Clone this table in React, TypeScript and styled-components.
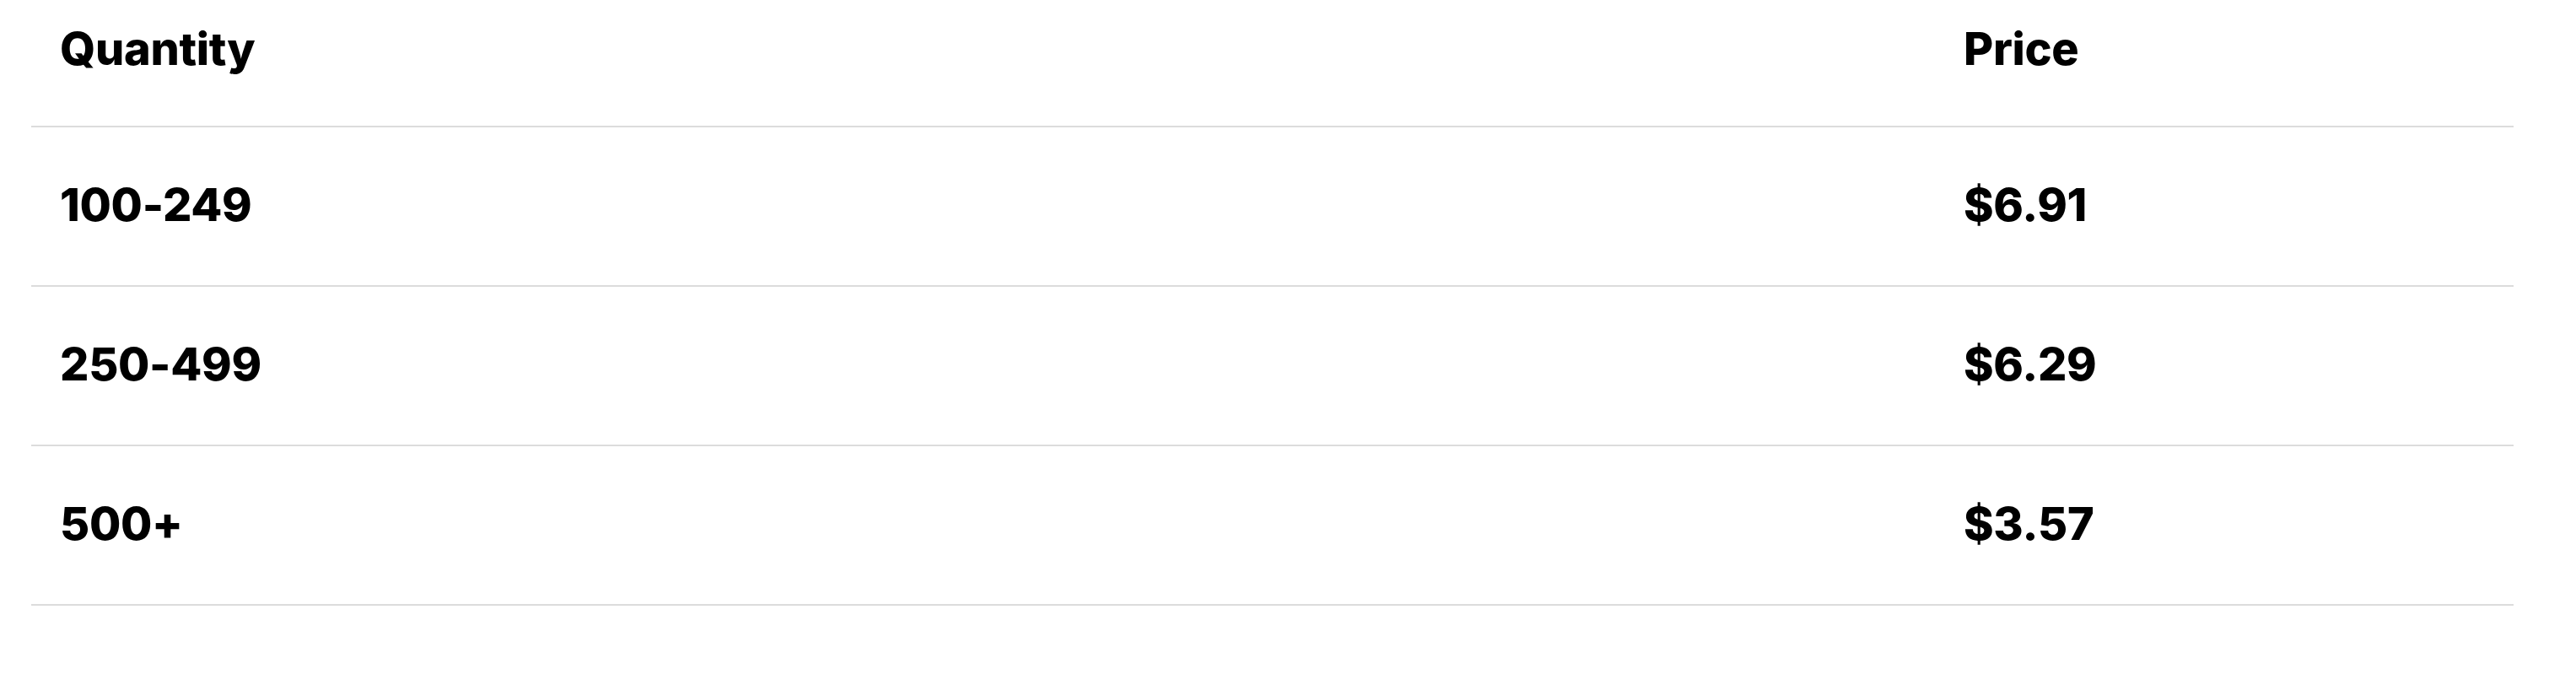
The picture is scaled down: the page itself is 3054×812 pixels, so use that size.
import React from 'react';
import styled, { createGlobalStyle } from 'styled-components';

const GlobalStyle = createGlobalStyle`
    html, body {
        margin: 0;
        padding: 0;
        background: #ffffff;
    }

    body {
        font-family: Inter, "Liberation Sans", sans-serif;
        color: #000000;
    }
`;

const Page = styled.div`
    padding-left: 37px;
    width: 2943px;
`;

const Table = styled.table`
    width: 100%;
    border-collapse: collapse;
    table-layout: fixed;
`;

const HeadCell = styled.th<{ $width?: number }>`
    width: ${props => (props.$width ? `${props.$width}px` : 'auto')};
    height: 150px;
    padding: 26px 0 0 34px;
    box-sizing: border-box;
    text-align: left;
    vertical-align: top;
    font-size: 54px;
    font-weight: 800;
    letter-spacing: -0.3px;
    line-height: 1.2;
    border-bottom: 2px solid #dcdcdc;
`;

const Row = styled.tr`
    height: 189px;
`;

const Cell = styled.td`
    padding: 0 0 2px 34px;
    text-align: left;
    vertical-align: middle;
    font-size: 54px;
    font-weight: 800;
    letter-spacing: -0.3px;
    line-height: 1.2;
    border-bottom: 2px solid #dcdcdc;
`;

interface Tier {
    quantity: string;
    price: string;
}

const tiers: Tier[] = [
    { quantity: '100-249', price: '$6.91' },
    { quantity: '250-499', price: '$6.29' },
    { quantity: '500+', price: '$3.57' },
];

const App: React.FC = () => {
    return (
        <>
            <GlobalStyle />
            <Page>
                <Table>
                    <thead>
                        <tr>
                            <HeadCell $width={2257}>Quantity</HeadCell>
                            <HeadCell>Price</HeadCell>
                        </tr>
                    </thead>
                    <tbody>
                        {tiers.map(tier => (
                            <Row key={tier.quantity}>
                                <Cell>{tier.quantity}</Cell>
                                <Cell>{tier.price}</Cell>
                            </Row>
                        ))}
                    </tbody>
                </Table>
            </Page>
        </>
    );
};

export default App;
